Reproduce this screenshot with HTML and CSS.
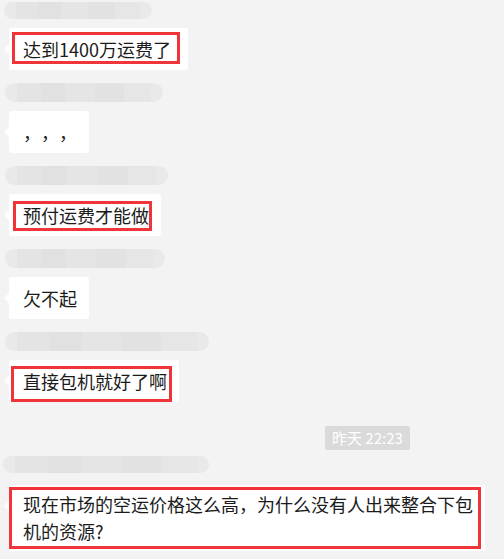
FILE: index.html
```html
<!DOCTYPE html>
<html lang="zh-CN">
<head>
<meta charset="utf-8">
<link rel="stylesheet" href="styles.css">
</head>
<body>
<div class="chat">
  <div class="msg first">
    <div class="name w1"><span class="blur"></span></div>
    <div class="bubble small">达到1400万运费了<span class="mark m1"></span></div>
  </div>
  <div class="msg">
    <div class="name w2"><span class="blur"></span></div>
    <div class="bubble commas">，，，</div>
  </div>
  <div class="msg">
    <div class="name w3"><span class="blur"></span></div>
    <div class="bubble">预付运费才能做<span class="mark m3"></span></div>
  </div>
  <div class="msg">
    <div class="name w4"><span class="blur"></span></div>
    <div class="bubble">欠不起</div>
  </div>
  <div class="msg">
    <div class="name w5"><span class="blur"></span></div>
    <div class="bubble">直接包机就好了啊<span class="mark m5"></span></div>
  </div>
  <div class="time-row"><span class="time">昨天 22:23</span></div>
  <div class="msg last">
    <div class="name w6"><span class="blur"></span></div>
    <div class="bubble long">现在市场的空运价格这么高，为什么没有人出来整合下包机的资源?<span class="mark m6"></span></div>
  </div>
</div>
</body>
</html>
```
FILE: styles.css
```css
html, body {
  margin: 0;
  padding: 0;
  background: #f3f3f3;
}
body {
  width: 504px;
  height: 559px;
  overflow: hidden;
  font-family: "Noto Sans CJK SC", "Noto Sans", sans-serif;
  color: #1b1b1b;
  text-spacing-trim: space-all;
}
.chat {
  display: flex;
  flex-direction: column;
  padding-top: 2px;
}
.msg {
  display: flex;
  flex-direction: column;
  align-items: flex-start;
  margin-bottom: 13px;
}
.name {
  height: 19px;
  margin-left: 5px;
  margin-bottom: 9px;
  border-radius: 10px;
  background: #e9e9e9;
  display: flex;
  padding: 0 12px;
  box-sizing: border-box;
}
.blur {
  flex: 1;
  background: linear-gradient(90deg, #e4e4e4 0 18%, #e1e1e1 18% 36%, #e5e5e5 36% 58%, #e2e2e2 58% 80%, #e6e6e6 80% 100%);
}
.w1 { width: 148px; margin-left: 4px; height: 17px; }
.w2 { width: 158px; }
.w3 { width: 163px; }
.w4 { width: 160px; }
.w5 { width: 204px; }
.w6 { width: 206px; margin-left: 3px; height: 17px; margin-bottom: 12px; }

.bubble {
  position: relative;
  margin-left: 9px;
  background: #ffffff;
  border-radius: 3px;
  font-size: 18px;
  line-height: 42px;
  height: 42px;
  padding: 0 12px 0 14px;
  white-space: nowrap;
}
.bubble::before {
  content: "";
  position: absolute;
  left: -5px;
  top: 16px;
  border-top: 5px solid transparent;
  border-bottom: 5px solid transparent;
  border-right: 5px solid #ffffff;
}
.small {
  width: 152px;
  padding-right: 13px;
}
.commas {
  width: 54px;
}
.long {
  white-space: normal;
  width: 450px;
  height: auto;
  line-height: 27px;
  padding: 6px 12px 6px 14px;
}
.mark {
  position: absolute;
  border: 3px solid #f0353a;
  box-sizing: border-box;
  pointer-events: none;
}
.m1 { left: 3px; top: 4px; width: 168px; height: 32px; }
.m3 { left: 4px; top: 7px; width: 139px; height: 30px; }
.m5 { left: 2px; top: 6px; width: 161px; height: 36px; }
.m6 { left: 0; top: 2px; width: 472px; height: 62px; }

.time-row {
  display: flex;
  margin-top: 11px;
  margin-bottom: 6px;
  padding-left: 325px;
}
.time {
  background: #dadada;
  color: #ffffff;
  font-size: 15px;
  line-height: 24px;
  height: 24px;
  padding: 0 7px;
  border-radius: 2px;
}
```
